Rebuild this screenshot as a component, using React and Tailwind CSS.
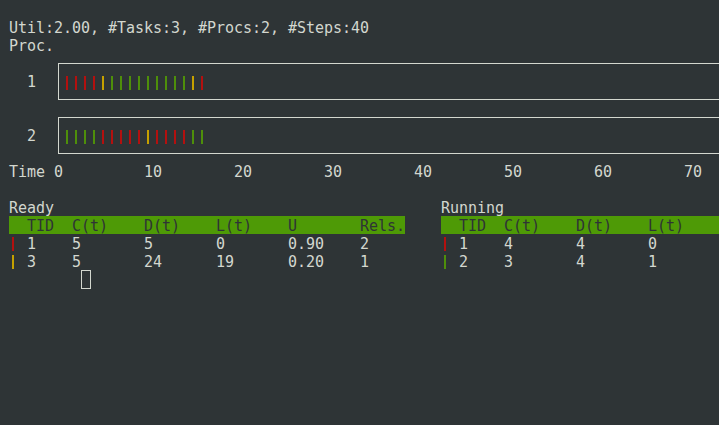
import React from 'react';

const R = 'bg-[#b3100f]';
const G = 'bg-[#4e8f0a]';
const Y = 'bg-[#c4a000]';

const procs = [
  { id: 1, bars: [R, R, R, R, Y, G, G, G, G, G, G, G, G, G, Y, R] },
  { id: 2, bars: [G, G, G, G, R, R, R, R, R, Y, R, R, R, R, G, G] },
];

// widths in terminal cells (9px each)
const cols = ['w-[18px]', 'w-[45px]', 'w-[72px]', 'w-[72px]', 'w-[72px]', 'w-[72px]', 'w-[45px]'];
const headers = ['', 'TID', 'C(t)', 'D(t)', 'L(t)', 'U', 'Rels.'];

const ready = [
  { color: 'bg-[#b3100f]', cells: ['1', '5', '5', '0', '0.90', '2'] },
  { color: 'bg-[#c4a000]', cells: ['3', '5', '24', '19', '0.20', '1'] },
];

const running = [
  { color: 'bg-[#b3100f]', cells: ['1', '4', '4', '0', '0.90', '2'] },
  { color: 'bg-[#4e8f0a]', cells: ['2', '3', '4', '1', '0.80', '1'] },
];

const TaskTable = ({ title, rows, cursor }) => (
  <div className="w-[396px] shrink-0">
    <div className="h-[18px]">{title}</div>
    <div className="flex h-[18px] bg-[#4e9a06] text-[#2e3436]">
      {headers.map((h, i) => (
        <div key={i} className={`${cols[i]} shrink-0 h-[18px] whitespace-pre`}>{h}</div>
      ))}
    </div>
    {rows.map((r, j) => (
      <div key={j} className="flex h-[18px]">
        <div className={`${cols[0]} shrink-0 flex`}>
          <div className={`ml-[3px] mt-[3px] w-[2px] h-[14px] ${r.color}`}></div>
        </div>
        {r.cells.map((c, i) => (
          <div key={i} className={`${cols[i + 1]} shrink-0 h-[18px] whitespace-pre`}>{c}</div>
        ))}
      </div>
    ))}
    {cursor && <div className="ml-[72px] w-[10px] h-[19px] border border-[#d3d7cf]"></div>}
  </div>
);

export default function App() {
  return (
    <div className="w-[719px] h-[425px] overflow-hidden bg-[#2e3436] text-[#d3d7cf] text-[15px] leading-[21px] tracking-[-0.03px] font-['DejaVu_Sans_Mono',monospace]">
      <div className="pt-[18px] pl-[9px] w-[900px]">
        <div className="h-[18px] whitespace-pre">Util:2.00, #Tasks:3, #Procs:2, #Steps:40</div>
        <div className="h-[18px] whitespace-pre">Proc.</div>

        {procs.map((p) => (
          <div key={p.id} className="flex h-[54px]">
            <div className="w-[49px] shrink-0 pl-[18px] pt-[18px]">{p.id}</div>
            <div className="mt-[9px] h-[37px] w-[800px] border border-[#d3d7cf] pl-[7px] pt-[12px] flex gap-[7px]">
              {p.bars.map((b, i) => (
                <div key={i} className={`w-[2px] h-[14px] ${b}`}></div>
              ))}
            </div>
          </div>
        ))}

        <div className="h-[18px] whitespace-pre">Time 0         10        20        30        40        50        60        70</div>
        <div className="h-[18px]"></div>

        <div className="flex gap-[36px]">
          <TaskTable title="Ready" rows={ready} cursor />
          <TaskTable title="Running" rows={running} />
        </div>
      </div>
    </div>
  );
}
